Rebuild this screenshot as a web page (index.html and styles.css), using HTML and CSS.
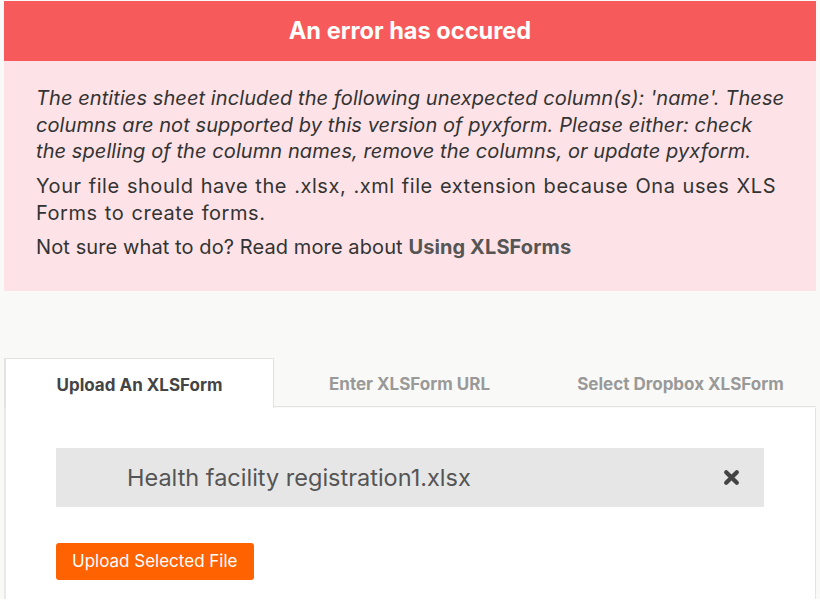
FILE: index.html
```html
<!DOCTYPE html>
<html lang="en">
<head>
    <meta charset="UTF-8">
    <meta name="viewport" content="width=device-width, initial-scale=1.0">
    <title>Upload XLSForm</title>
    <link rel="stylesheet" href="styles.css">
</head>
<body>
    <div class="page">
        <div class="error-head">An error has occured</div>
        <div class="error-body">
            <p class="error-msg">The entities sheet included the following unexpected column(s): 'name'. These<br>columns are not supported by this version of pyxform. Please either: check<br>the spelling of the column names, remove the columns, or update pyxform.</p>
            <p class="error-note">Your file should have the .xlsx, .xml file extension because Ona uses XLS<br>Forms to create forms.</p>
            <p class="error-help">Not sure what to do? Read more about <a href="#">Using XLSForms</a></p>
        </div>

        <div class="tabs">
            <div class="tab active">Upload An XLSForm</div>
            <div class="tab">Enter XLSForm URL</div>
            <div class="tab">Select Dropbox XLSForm</div>
        </div>
        <div class="panel">
            <div class="file-box">
                <span class="file-name">Health facility registration1.xlsx</span>
                <svg class="file-remove" width="17" height="17" viewBox="0 0 16 16">
                    <path d="M3 3 L13 13 M13 3 L3 13" stroke="#444" stroke-width="4" stroke-linecap="round"/>
                </svg>
            </div>
            <button class="upload-btn">Upload Selected File</button>
        </div>
    </div>
</body>
</html>
```

FILE: styles.css
```css
body {
    margin: 0;
    font-family: Inter, "Noto Sans", sans-serif;
    background-color: #ffffff;
    color: #333;
}
.page {
    background-color: #f9f9f7;
    padding: 1px 4px 0;
}
.error-head {
    background-color: #f75a5a;
    color: #fff;
    font-weight: 700;
    font-size: 23.6px;
    text-align: center;
    height: 60px;
    line-height: 60px;
}
.error-body {
    background-color: #fde3e7;
    padding: 24px 10px 31px 32px;
    font-size: 20px;
    color: #333;
    white-space: nowrap;
}
.error-body p {
    margin: 0;
}
.error-msg {
    font-style: italic;
    line-height: 26.5px;
    letter-spacing: 0.08px;
}
.error-note {
    margin-top: 8px !important;
    line-height: 27px;
    letter-spacing: 0.55px;
    word-spacing: 1px;
}
.error-help {
    margin-top: 7px !important;
    line-height: 26px;
    letter-spacing: 0.1px;
}
.error-help a {
    color: #555;
    font-weight: 700;
    text-decoration: none;
}
.tabs {
    display: flex;
    margin-top: 67px;
}
.tab {
    flex: 1;
    height: 49px;
    padding-top: 4px;
    box-sizing: border-box;
    display: flex;
    align-items: center;
    justify-content: center;
    font-weight: 700;
    font-size: 17px;
    color: #999;
    border-bottom: 1px solid #e3e3e3;
}
.tab.active {
    flex: none;
    width: 270px;
    background-color: #fff;
    color: #444;
    border: 1px solid #e3e3e3;
    border-left-width: 2px;
    border-bottom: none;
    height: 50px;
}
.panel {
    background-color: #fff;
    border-left: 2px solid #e9e9e9;
    border-right: 1px solid #e3e3e3;
    padding: 40px 51px 19px 50px;
}
.file-box {
    background-color: #e6e6e6;
    height: 59px;
    display: flex;
    align-items: center;
    justify-content: space-between;
    padding: 0 24px 0 71px;
}
.file-name {
    font-size: 23.5px;
    color: #555;
}
.upload-btn {
    margin-top: 36px;
    background-color: #ff6200;
    color: #fff;
    border: none;
    border-radius: 3px;
    font-family: Inter, "Noto Sans", sans-serif;
    font-size: 17px;
    height: 37px;
    padding: 0 16px;
    cursor: pointer;
}
```
